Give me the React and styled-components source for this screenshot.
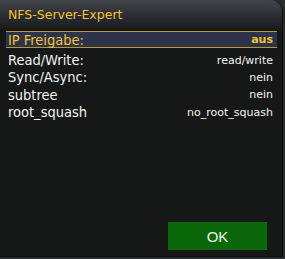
import React from "react";
import styled, { createGlobalStyle } from "styled-components";

const GlobalStyle = createGlobalStyle`
  html, body {
    margin: 0;
    padding: 0;
    background: #2a2b2c;
  }
  body {
    font-family: "DejaVu Sans", "Liberation Sans", sans-serif;
  }
`;

const Window = styled.div`
  width: 282px;
  height: 256px;
  background: #161817;
  border-top-right-radius: 12px;
  border-right: 1px solid #0c0d0d;
  border-bottom: 1px solid #0c0d0d;
  display: flex;
  flex-direction: column;
  overflow: hidden;
`;

const TitleBar = styled.div`
  height: 29px;
  padding: 0 8px;
  display: flex;
  align-items: center;
  background: linear-gradient(#42444c, #2a2c31 55%, #1a1b1e);
  color: #f2c232;
  font-size: 12.5px;
`;

const List = styled.div`
  display: flex;
  flex-direction: column;
  padding: 2px 5px 0 6px;
`;

const Row = styled.div`
  height: ${(p) => (p.$active ? "15px" : "17.3px")};
  display: flex;
  align-items: center;
  justify-content: space-between;
  padding: 0 4px 0 2px;
  background: ${(p) => (p.$active ? "#2d3349" : "transparent")};
  border-top: ${(p) => (p.$active ? "1px solid #b8963a" : "none")};
  border-bottom: ${(p) => (p.$active ? "1px solid #b8963a" : "none")};
  margin-bottom: ${(p) => (p.$active ? "3.5px" : "0")};
`;

const Label = styled.span`
  font-family: "DejaVu Sans Condensed", "DejaVu Sans", sans-serif;
  font-size: 14.5px;
  color: ${(p) => (p.$active ? "#f2c232" : "#f4f4f4")};
`;

const Value = styled.span`
  font-size: 11px;
  color: ${(p) => (p.$active ? "#f2c232" : "#f4f4f4")};
  font-weight: ${(p) => (p.$active ? "bold" : "normal")};
`;

const Footer = styled.div`
  margin-top: auto;
  display: flex;
  justify-content: flex-end;
  padding: 0 15px 6px 0;
`;

const OkButton = styled.button`
  width: 99px;
  height: 28px;
  border: none;
  background: #0a670a;
  color: #f0f0f0;
  font-family: "Liberation Sans", sans-serif;
  font-size: 15px;
`;

const rows = [
  { label: "IP Freigabe:", value: "aus", active: true },
  { label: "Read/Write:", value: "read/write" },
  { label: "Sync/Async:", value: "nein" },
  { label: "subtree", value: "nein" },
  { label: "root_squash", value: "no_root_squash" },
];

export default function App() {
  return (
    <>
      <GlobalStyle />
      <Window>
        <TitleBar>NFS-Server-Expert</TitleBar>
        <List>
          {rows.map((r) => (
            <Row key={r.label} $active={r.active}>
              <Label $active={r.active}>{r.label}</Label>
              <Value $active={r.active}>{r.value}</Value>
            </Row>
          ))}
        </List>
        <Footer>
          <OkButton>OK</OkButton>
        </Footer>
      </Window>
    </>
  );
}
